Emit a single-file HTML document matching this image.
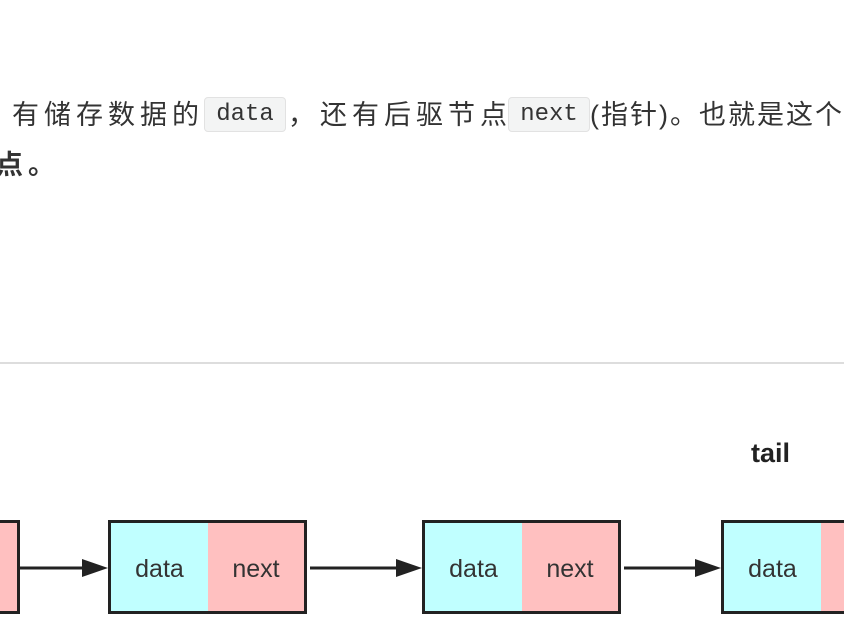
<!DOCTYPE html>
<html><head><meta charset="utf-8"><style>
body{margin:0;width:844px;height:644px;background:#fff;position:relative;overflow:hidden;font-family:"Liberation Sans","Noto Sans CJK SC",sans-serif;color:#333}
.t{position:absolute;font-size:27px;letter-spacing:5px;white-space:nowrap;line-height:34px}
.c{position:absolute;top:97px;height:33px;background:#f3f4f4;border:1px solid #e2e2e2;border-radius:4px;font-family:"Liberation Mono",monospace;font-size:24px;line-height:33px;text-align:center;color:#333}
.b{position:absolute;top:520px;height:88px;border:3px solid #222;font-size:25px;line-height:92px;text-align:center;color:#333;box-sizing:content-box}
.d{background:#c0ffff}.n{background:#ffc0c0}
</style></head><body>
<div class="t" style="left:12px;top:98px">有储存数据的</div>
<div class="c" style="left:204px;width:80px">data</div>
<div class="t" style="left:288px;top:98px">，还有后驱节点</div>
<div class="c" style="left:508px;width:80px">next</div>
<div class="t" style="left:590px;top:98px;letter-spacing:2px">(指针)。也就是这个</div>
<div class="t" style="left:-4px;top:148px;font-weight:bold">点。</div>
<div style="position:absolute;left:0;top:362px;width:844px;height:2px;background:#ddd"></div>
<div style="position:absolute;left:751px;top:438px;font-size:27px;font-weight:bold;color:#222">tail</div>
<div class="b n" style="left:-20px;width:34px"></div>
<div class="b d" style="left:108px;width:97px">data</div>
<div class="b n" style="left:208px;width:96px;border-left:none">next</div>
<div class="b d" style="left:422px;width:97px">data</div>
<div class="b n" style="left:522px;width:96px;border-left:none">next</div>
<div class="b d" style="left:721px;width:97px">data</div>
<div class="b n" style="left:821px;width:60px;border-left:none"></div>
<svg style="position:absolute;left:0;top:0" width="844" height="644">
<g stroke="#222" stroke-width="3"><line x1="17" y1="568" x2="85" y2="568"/><line x1="310" y1="568" x2="399" y2="568"/><line x1="624" y1="568" x2="698" y2="568"/></g>
<g fill="#222"><path d="M82 559L108 568L82 577Z"/><path d="M396 559L422 568L396 577Z"/><path d="M695 559L721 568L695 577Z"/></g>
</svg>
</body></html>
